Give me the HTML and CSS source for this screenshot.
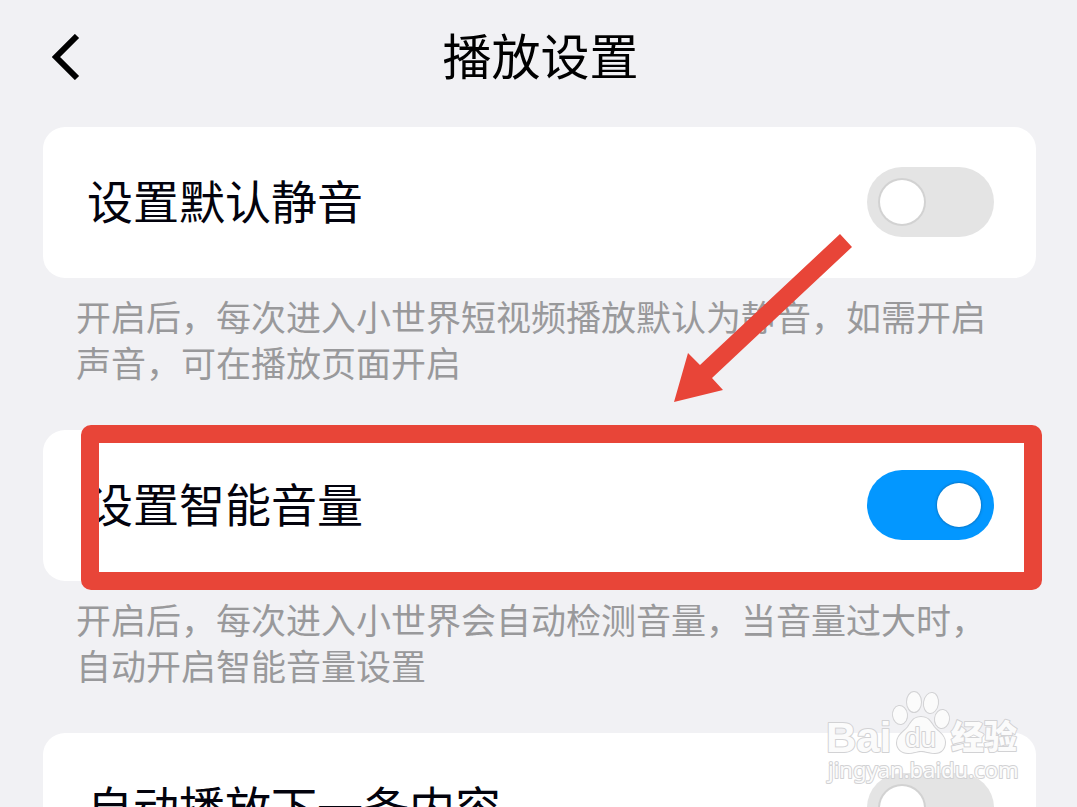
FILE: index.html
```html
<!DOCTYPE html>
<html lang="zh-CN">
<head>
<meta charset="utf-8">
<meta name="viewport" content="width=device-width, initial-scale=1">
<title>播放设置</title>
<link rel="stylesheet" href="styles.css">
</head>
<body>
<div class="screen">
  <header class="header">
    <button class="back" type="button" aria-label="返回">
      <svg class="back-icon" viewBox="0 0 28 46" aria-hidden="true"><path d="M25 2 4 23 25 44"/></svg>
    </button>
    <h1 class="title">播放设置</h1>
  </header>
  <main class="settings">
    <section class="group">
      <div class="card">
        <label class="label" for="mute">设置默认静音</label>
        <input class="switch" id="mute" type="checkbox" role="switch">
      </div>
      <p class="hint">开启后，每次进入小世界短视频播放默认为静音，如需开启声音，可在播放页面开启</p>
      <svg class="arrow" viewBox="0 0 180 170" aria-hidden="true"><path d="M167 0 179 13 39 144 50 156 1 168 15 119 27 131Z"/></svg>
    </section>
    <section class="group">
      <div class="card">
        <label class="label" for="smart">设置智能音量</label>
        <input class="switch" id="smart" type="checkbox" role="switch" checked>
      </div>
      <div class="highlight"></div>
      <p class="hint">开启后，每次进入小世界会自动检测音量，当音量过大时，自动开启智能音量设置</p>
    </section>
    <section class="group">
      <div class="card">
        <label class="label" for="next">自动播放下一条内容</label>
        <input class="switch" id="next" type="checkbox" role="switch">
      </div>
    </section>
  </main>
  <svg class="watermark" viewBox="0 0 204 100" role="img" aria-label="Baidu 经验">
    <text class="mark mark-latin" x="6" y="64">Bai</text>
    <g class="mark">
      <ellipse cx="80" cy="27" rx="7" ry="9" transform="rotate(-8 80 27)"/>
      <ellipse cx="94" cy="14" rx="7" ry="10"/>
      <ellipse cx="111" cy="15" rx="7" ry="10" transform="rotate(8 111 15)"/>
      <ellipse cx="122" cy="31" rx="7" ry="9" transform="rotate(8 122 31)"/>
      <path d="M101 29C94 29 92 33 88 39C84 44 77 47 77 55C77 61 82 65 88 65C94 65 97 63 101 63C106 63 109 65 115 65C121 65 125 61 125 54C125 47 118 44 114 39C110 33 108 29 101 29Z"/>
    </g>
    <text class="mark mark-du" x="85" y="59">du</text>
    <text class="mark mark-cjk" x="131" y="61">经验</text>
    <text class="mark mark-url" x="8" y="90">jingyan.baidu.com</text>
  </svg>
</div>
</body>
</html>
```
FILE: styles.css
```css
* {
  box-sizing: border-box;
}

body {
  margin: 0;
  background: #f1f1f4;
  color: #03030d;
  font-family: "Noto Sans CJK SC", sans-serif;
}

.screen {
  position: relative;
  height: 100vh;
  overflow: hidden;
}

.header {
  display: grid;
  grid-template-columns: 80px 1fr 76px;
  align-items: start;
  padding: 20px 0 33px;
}

.back {
  display: flex;
  align-items: center;
  justify-content: flex-end;
  height: 74px;
  padding: 0;
  border: 0;
  background: none;
  cursor: pointer;
}

.back-icon {
  width: 28px;
  height: 46px;
  fill: none;
  stroke: #000;
  stroke-width: 6;
}

.title {
  margin: 0;
  color: #000;
  font-size: 49px;
  font-weight: 400;
  line-height: 68px;
  text-align: center;
}

.settings {
  padding: 0 41px 0 43px;
}

.group {
  position: relative;
}

.card {
  display: flex;
  align-items: flex-start;
  justify-content: space-between;
  padding: 40px 42px 41px 44px;
  border-radius: 22px;
  background: #fff;
}

.label {
  font-size: 46px;
  line-height: 65px;
}

.switch {
  appearance: none;
  display: flex;
  align-items: center;
  width: 127px;
  height: 70px;
  margin: 0;
  padding: 0 13px;
  border-radius: 35px;
  background: #e4e4e4;
  cursor: pointer;
}

.switch::before {
  content: "";
  width: 44px;
  height: 44px;
  border-radius: 50%;
  background: #fff;
  box-shadow: 0 0 0 2px #d2d2d2;
}

.switch:checked {
  justify-content: flex-end;
  background: #0397ff;
}

.switch:checked::before {
  box-shadow: 0 0 2px 1px #0879cc;
}

.hint {
  margin: 0;
  padding: 15px 32px 45px 33px;
  color: #99999b;
  font-size: 35px;
  line-height: 46px;
}

.arrow {
  position: absolute;
  top: 107px;
  right: 183px;
  width: 180px;
  height: 170px;
  fill: #e84538;
}

.highlight {
  position: absolute;
  top: -5px;
  left: 38px;
  right: -6px;
  height: 165px;
  border: 18px solid #e84538;
  border-radius: 10px;
}

.watermark {
  position: absolute;
  top: 688px;
  right: 53px;
  width: 204px;
  height: 100px;
}

.mark {
  fill: #fbfbfb;
  stroke: #d2d2d4;
  stroke-width: 2;
  stroke-linejoin: round;
  paint-order: stroke;
}

.mark-latin {
  font: 700 42px "Liberation Sans", sans-serif;
}

.mark-du {
  font: 400 28px "Liberation Sans", sans-serif;
}

.mark-cjk {
  font: 900 33px "Noto Sans CJK SC", sans-serif;
}

.mark-url {
  font: 400 22px "Noto Sans", sans-serif;
}
```
